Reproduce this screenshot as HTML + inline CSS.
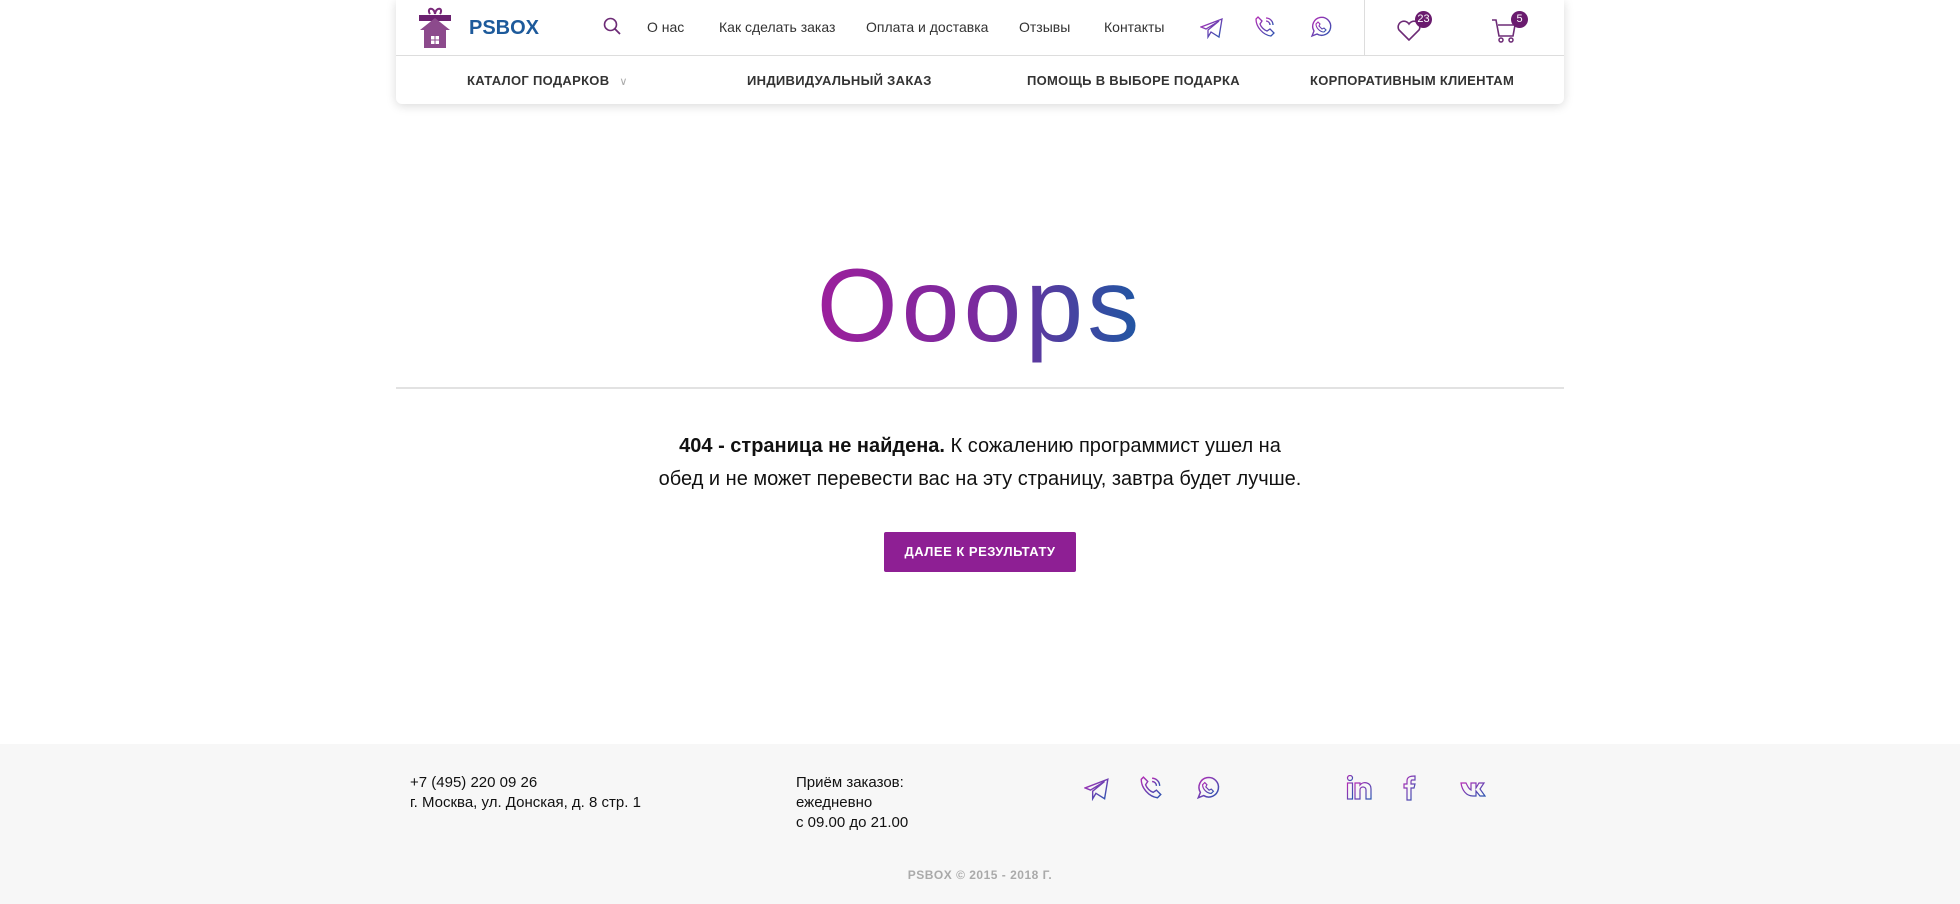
<!DOCTYPE html>
<html><head><meta charset="utf-8">
<style>
*{margin:0;padding:0;box-sizing:border-box}
body{width:1960px;height:904px;background:#fff;font-family:"Liberation Sans",sans-serif;color:#222;position:relative;overflow:hidden}
.hdr{position:absolute;left:396px;top:0;width:1168px;height:104px;background:#fff;box-shadow:0 2px 10px rgba(0,0,0,.15);border-radius:0 0 6px 6px}
.row1{position:absolute;left:0;top:0;width:100%;height:56px;border-bottom:1px solid #ddd}
.a{position:absolute;font-size:14px;color:#333;top:19px}
.b{position:absolute;top:73px;font-size:13px;font-weight:bold;color:#333;letter-spacing:.3px}
.abs{position:absolute}
.badge{position:absolute;background:#6a1b6e;color:#fff;font-size:11px;border-radius:50%;width:17px;height:17px;text-align:center;line-height:17px}
.ooops{position:absolute;left:0;width:1960px;top:236px;text-align:center;font-size:104px;line-height:140px;letter-spacing:4px}
.p{position:absolute;left:0;width:1960px;top:430px;text-align:center;font-size:20px;line-height:33px;color:#111}
.btn{position:absolute;left:884px;top:532px;width:192px;height:40px;background:#8e1f94;color:#fff;font-size:13px;font-weight:bold;text-align:center;line-height:40px;border-radius:2px;letter-spacing:.5px}
.ft{position:absolute;left:0;top:744px;width:1960px;height:160px;background:#f7f7f7}
.ft .t{position:absolute;font-size:15px;line-height:20px;color:#111}
</style></head><body>
<svg width="0" height="0" style="position:absolute"><defs><linearGradient id="g" x1="0" y1="0" x2="1" y2="1"><stop offset="0" stop-color="#b32bb5"/><stop offset="1" stop-color="#2a55b0"/></linearGradient></defs></svg>
<div class="hdr">
 <div class="row1">
  <svg class="abs" style="left:22px;top:6px" width="34" height="42" viewBox="0 0 34 42"><path d="M12 8c-4-6 4-8 5 0c1-8 9-6 5 0" fill="none" stroke="#7a2a7a" stroke-width="2"/><rect x="1" y="9" width="32" height="6" fill="#6b2170"/><path d="M17 12L2 24h4v18h22V24h4z" fill="#8c4a8c"/><rect x="13" y="30" width="8" height="8" fill="#fff"/><path d="M17 30v8M13 34h8" stroke="#8c4a8c"/></svg>
  <div class="abs" style="left:73px;top:17px;font-size:20px;font-weight:bold;color:#1d5a9b">PSBOX</div>
  <svg class="abs" style="left:207px;top:17px" width="18" height="18" viewBox="0 0 18 18"><circle cx="7.5" cy="7.5" r="6" fill="none" stroke="#6d2b76" stroke-width="1.6"/><path d="M12 12l5 5" stroke="#6d2b76" stroke-width="1.8"/></svg>
  <div class="a" style="left:251px">О нас</div>
  <div class="a" style="left:323px">Как сделать заказ</div>
  <div class="a" style="left:470px">Оплата и доставка</div>
  <div class="a" style="left:623px">Отзывы</div>
  <div class="a" style="left:708px">Контакты</div>
  <svg class="abs" style="left:804px;top:17px" width="24" height="22" viewBox="0 0 24 22"><path d="M1 10L22 2 19 20 11 15 8 20 8 13 19 4 6 12z" fill="none" stroke="url(#g)" stroke-width="1.3"/></svg>
  <svg class="abs" style="left:858px;top:15px" width="22" height="24" viewBox="0 0 22 24"><path d="M4 2l4 4-2 3c1 3 4 6 7 7l3-2 4 4-3 3C9 20 2 12 2 4z" fill="none" stroke="url(#g)" stroke-width="1.3"/><path d="M12 3a7 7 0 0 1 7 7M12 6a4 4 0 0 1 4 4" fill="none" stroke="url(#g)" stroke-width="1.3"/></svg>
  <svg class="abs" style="left:913px;top:15px" width="24" height="24" viewBox="0 0 24 24"><path d="M3 21l2-5a9 9 0 1 1 3 3z" fill="none" stroke="url(#g)" stroke-width="1.4"/><path d="M9 7l2 2-1 2 3 3 2-1 2 2-2 2c-4 0-8-4-8-8z" fill="none" stroke="url(#g)" stroke-width="1.1"/></svg>
  <div class="abs" style="left:968px;top:0;width:1px;height:56px;background:#ddd"></div>
  <svg class="abs" style="left:1000px;top:20px" width="26" height="22" viewBox="0 0 26 22"><path d="M13 20L3 10a5 5 0 0 1 10-6 5 5 0 0 1 10 6z" fill="none" stroke="#6d2b76" stroke-width="1.6"/></svg>
  <div class="badge" style="left:1019px;top:11px">23</div>
  <svg class="abs" style="left:1095px;top:18px" width="28" height="26" viewBox="0 0 28 26"><path d="M1 2h4l3 16h14l2-11H7" fill="none" stroke="#6d2b76" stroke-width="1.6"/><circle cx="10" cy="22" r="2" fill="none" stroke="#6d2b76" stroke-width="1.5"/><circle cx="20" cy="22" r="2" fill="none" stroke="#6d2b76" stroke-width="1.5"/></svg>
  <div class="badge" style="left:1115px;top:11px">5</div>
 </div>
 <div class="b" style="left:71px">КАТАЛОГ ПОДАРКОВ <span style="color:#aaa;font-weight:normal;font-size:11px;margin-left:6px">∨</span></div>
 <div class="b" style="left:351px">ИНДИВИДУАЛЬНЫЙ ЗАКАЗ</div>
 <div class="b" style="left:631px">ПОМОЩЬ В ВЫБОРЕ ПОДАРКА</div>
 <div class="b" style="left:914px">КОРПОРАТИВНЫМ КЛИЕНТАМ</div>
</div>
<div class="ooops"><span style="background:linear-gradient(90deg,#9c1f9c,#7a2a9e 50%,#1e57a3);-webkit-background-clip:text;background-clip:text;color:transparent">Ooops</span></div>
<div class="abs" style="left:396px;top:387px;width:1168px;height:2px;background:#e2e2e2"></div>
<div class="p"><b>404 - страница не найдена.</b> К сожалению программист ушел на<br>обед и не может перевести вас на эту страницу, завтра будет лучше.</div>
<div class="btn">ДАЛЕЕ К РЕЗУЛЬТАТУ</div>
<div class="ft">
 <div class="t" style="left:410px;top:29px">+7 (495) 220 09 26<br>г. Москва, ул. Донская, д. 8 стр. 1</div>
 <div class="t" style="left:796px;top:29px">Приём заказов:<br>ежедневно<br>с 09.00 до 21.00</div>
 <svg class="abs" style="left:1084px;top:33px" width="26" height="24" viewBox="0 0 24 22"><path d="M1 10L22 2 19 20 11 15 8 20 8 13 19 4 6 12z" fill="none" stroke="url(#g)" stroke-width="1.3"/></svg>
 <svg class="abs" style="left:1139px;top:31px" width="24" height="26" viewBox="0 0 22 24"><path d="M4 2l4 4-2 3c1 3 4 6 7 7l3-2 4 4-3 3C9 20 2 12 2 4z" fill="none" stroke="url(#g)" stroke-width="1.3"/><path d="M12 3a7 7 0 0 1 7 7M12 6a4 4 0 0 1 4 4" fill="none" stroke="url(#g)" stroke-width="1.3"/></svg>
 <svg class="abs" style="left:1195px;top:31px" width="26" height="26" viewBox="0 0 24 24"><path d="M3 21l2-5a9 9 0 1 1 3 3z" fill="none" stroke="url(#g)" stroke-width="1.4"/><path d="M9 7l2 2-1 2 3 3 2-1 2 2-2 2c-4 0-8-4-8-8z" fill="none" stroke="url(#g)" stroke-width="1.1"/></svg>
 <svg class="abs" style="left:1346px;top:31px" width="26" height="25" viewBox="0 0 26 25"><circle cx="4" cy="3" r="2.5" fill="none" stroke="url(#g)" stroke-width="1.2"/><rect x="1.5" y="8" width="5" height="16" fill="none" stroke="url(#g)" stroke-width="1.2"/><path d="M9 8h5v2c3-4 11-3 11 4v10h-5V15c0-4-6-4-6 0v9H9z" fill="none" stroke="url(#g)" stroke-width="1.2"/></svg>
 <svg class="abs" style="left:1402px;top:31px" width="16" height="26" viewBox="0 0 16 26"><path d="M5 25V13H2V9h3V6c0-4 3-5 8-5v4h-3c-1 0-1 1-1 2v2h4l-1 4H9v12z" fill="none" stroke="url(#g)" stroke-width="1.2"/></svg>
 <svg class="abs" style="left:1460px;top:37px" width="26" height="16" viewBox="0 0 26 16"><path d="M1 2h5c2 4 3 6 5 7V2h5v5l3-5h5l-4 6 5 7h-5l-4-5v5h-3C6 15 2 9 1 2z" fill="none" stroke="url(#g)" stroke-width="1.2"/></svg>
 <div class="abs" style="left:0;width:1960px;top:124px;text-align:center;font-size:12px;font-weight:bold;color:#aaa;letter-spacing:.5px">PSBOX © 2015 - 2018 Г.</div>
</div>
</body></html>
